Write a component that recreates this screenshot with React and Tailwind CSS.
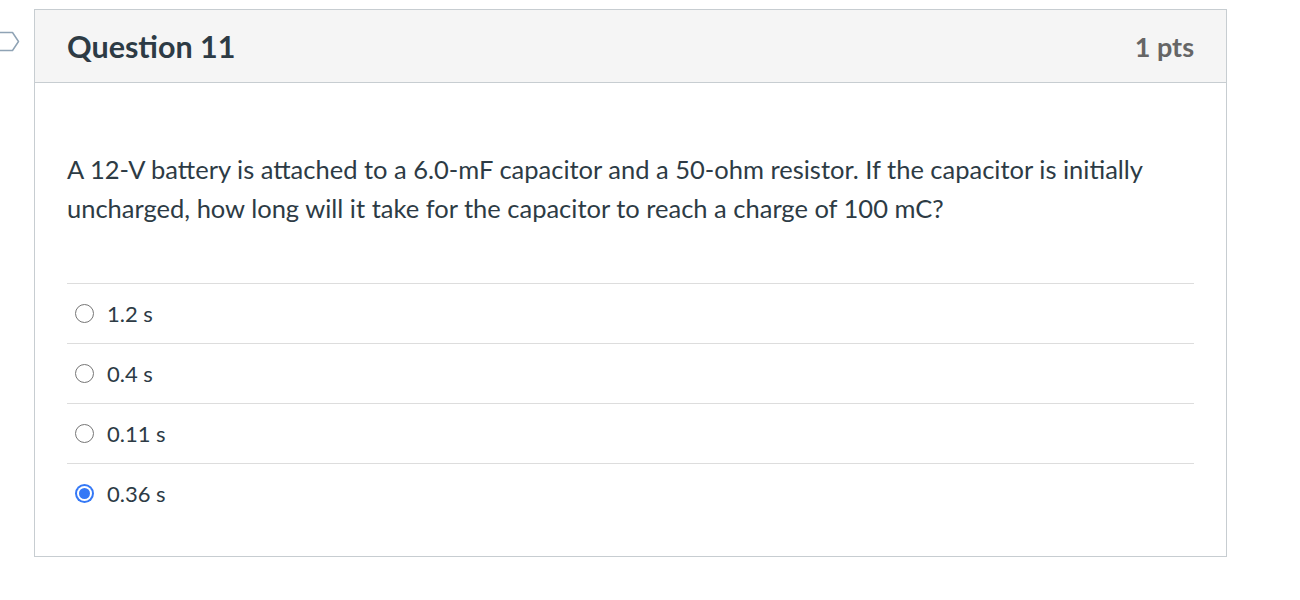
import React from 'react';

const answers = [
  { label: '1.2 s', checked: false },
  { label: '0.4 s', checked: false },
  { label: '0.11 s', checked: false },
  { label: '0.36 s', checked: true },
];

// Radio dot styled like Chrome's native control
const Radio = ({ checked }) => {
  if (checked) {
    return (
      <span className="w-[19px] h-[19px] rounded-full bg-[#3478f6] flex items-center justify-center shrink-0">
        <span className="w-[15px] h-[15px] rounded-full bg-white flex items-center justify-center">
          <span className="w-[11px] h-[11px] rounded-full bg-[#3478f6]" />
        </span>
      </span>
    );
  }
  return <span className="w-[19px] h-[19px] rounded-full border border-[#767676] bg-white shrink-0" />;
};

export default function App() {
  return (
    <div className="w-[1300px] h-[600px] bg-white flex font-['Lato','Noto_Sans',sans-serif] text-[#2d3b45]">
      {/* question flag marker */}
      <div className="w-[34px] shrink-0 pt-[31px]">
        <svg width="20" height="21" viewBox="0 0 20 21" fill="none">
          <path d="M-4 1.5 H12.5 L18.5 10.5 L12.5 19.5 H-4" stroke="#8fa3b5" strokeWidth="1.5" strokeLinejoin="round" />
        </svg>
      </div>

      <div className="mt-[9px] w-[1193px] h-[548px] border border-[#c7cdd1] flex flex-col">
        <div className="h-[73px] shrink-0 bg-[#f5f5f5] border-b border-[#c7cdd1] flex items-center justify-between px-[32px]">
          <h2 className="text-[30.5px] font-bold text-[#2d3b45] leading-none">Question 11</h2>
          <span className="text-[27px] font-bold text-[#666666] leading-none">1 pts</span>
        </div>

        <div className="px-[32px] pt-[67px]">
          <p className="text-[25.5px] leading-[39px] text-[#2d3b45]">
            A 12-V battery is attached to a 6.0-mF capacitor and a 50-ohm resistor. If the capacitor is initially uncharged, how long will it take for the capacitor to reach a charge of 100 mC?
          </p>

          <div className="mt-[55px]">
            {answers.map((a) => (
              <div key={a.label} className="h-[60px] border-t border-[#dddddd] flex items-center pl-[8px] gap-[13px]">
                <Radio checked={a.checked} />
                <span className="text-[22px] text-[#2d3b45]">{a.label}</span>
              </div>
            ))}
          </div>
        </div>
      </div>
    </div>
  );
}
